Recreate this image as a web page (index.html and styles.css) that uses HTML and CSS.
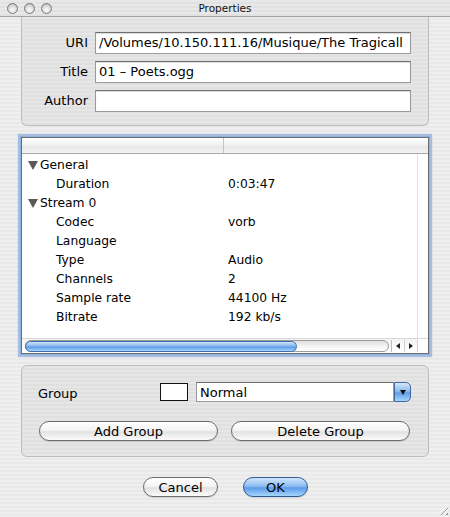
FILE: index.html
```html
<!DOCTYPE html>
<html>
<head>
<meta charset="utf-8">
<link rel="stylesheet" href="styles.css">
</head>
<body>
<div class="window">
  <div class="titlebar">
    <div class="lights"><span class="light"></span><span class="light"></span><span class="light"></span></div>
    <div class="title">Properties</div>
    <div></div>
  </div>

  <div class="box meta">
    <div class="lbl">URI</div><div class="field">/Volumes/10.150.111.16/Musique/The Tragicall</div>
    <div class="lbl">Title</div><div class="field">01 – Poets.ogg</div>
    <div class="lbl">Author</div><div class="field"></div>
  </div>

  <div class="tree">
    <div class="tree-head"><div class="hcol1"></div><div class="hcol2"></div></div>
    <div class="tree-main">
      <div class="rows">
        <div class="row"><div class="c1 parent"><span class="tri"></span>General</div><div class="c2"></div></div>
        <div class="row"><div class="c1 child">Duration</div><div class="c2">0:03:47</div></div>
        <div class="row"><div class="c1 parent"><span class="tri"></span>Stream 0</div><div class="c2"></div></div>
        <div class="row"><div class="c1 child">Codec</div><div class="c2">vorb</div></div>
        <div class="row"><div class="c1 child">Language</div><div class="c2"></div></div>
        <div class="row"><div class="c1 child">Type</div><div class="c2">Audio</div></div>
        <div class="row"><div class="c1 child">Channels</div><div class="c2">2</div></div>
        <div class="row"><div class="c1 child">Sample rate</div><div class="c2">44100 Hz</div></div>
        <div class="row"><div class="c1 child">Bitrate</div><div class="c2">192 kb/s</div></div>
      </div>
      <div class="vscroll"></div>
    </div>
    <div class="hscroll">
      <div class="track"><div class="thumb"></div></div>
      <div class="arrows"><span class="arr left"></span><span class="arr right"></span></div>
      <div class="corner"></div>
    </div>
  </div>

  <div class="box group">
    <div class="grow">
      <div class="glabel">Group</div>
      <div class="swatch"></div>
      <div class="combo"><div class="combo-text">Normal</div><div class="combo-btn"><span class="dtri"></span></div></div>
    </div>
    <div class="gbuttons">
      <div class="btn wide">Add Group</div>
      <div class="btn wide">Delete Group</div>
    </div>
  </div>

  <div class="actions">
    <div class="btn cancel">Cancel</div>
    <div class="btn ok">OK</div>
  </div>

  <div class="grip"></div>
</div>
</body>
</html>
```

FILE: styles.css
```css
* { box-sizing: border-box; }
html, body { margin: 0; padding: 0; }
body {
  width: 450px;
  height: 517px;
  overflow: hidden;
  font-family: "DejaVu Sans", "Liberation Sans", sans-serif;
  font-size: 12px;
  color: #000;
}
.window {
  position: relative;
  width: 450px;
  height: 517px;
  display: flex;
  flex-direction: column;
  background: repeating-linear-gradient(to bottom, #efefef 0, #efefef 2px, #e9e9e9 2px, #e9e9e9 4px);
}
.titlebar {
  height: 17px;
  flex: none;
  border-bottom: 1px solid #a3a3a3;
  background: repeating-linear-gradient(to bottom, #e8e8e8 0, #e8e8e8 2px, #e1e1e1 2px, #e1e1e1 4px);
  display: grid;
  grid-template-columns: 1fr auto 1fr;
  align-items: center;
}
.lights { display: flex; gap: 6px; padding-left: 7px; }
.light {
  width: 11px;
  height: 11px;
  border-radius: 50%;
  border: 1px solid #7a7a7a;
  background: radial-gradient(circle at 50% 65%, #fbfbfb 0, #e0e0e0 45%, #b0b0b0 100%);
}
.title { font-size: 10.5px; color: #111; line-height: 16px; }

.box {
  margin: 0 21px;
  border: 1px solid #bdbdbd;
  background: repeating-linear-gradient(to bottom, #e6e6e6 0, #e6e6e6 2px, #e0e0e0 2px, #e0e0e0 4px);
}
.meta {
  height: 109px;
  flex: none;
  border-top: none;
  border-radius: 0 0 6px 6px;
  padding: 15px 17px 0 0;
  display: grid;
  grid-template-columns: 66px 1fr;
  grid-auto-rows: 22px;
  column-gap: 7px;
  row-gap: 7px;
}
.lbl { text-align: right; line-height: 22px; font-size: 13px; }
.field {
  background: #fff;
  border: 1px solid #9a9a9a;
  border-top-color: #6f6f6f;
  box-shadow: inset 0 1px 1px rgba(0,0,0,0.15);
  padding: 0 3px;
  line-height: 20px;
  font-size: 13px;
  white-space: nowrap;
  overflow: hidden;
}

.tree {
  margin: 11px 21px 0;
  height: 217px;
  flex: none;
  border: 1px solid #6d6d6d;
  background: #fff;
  box-shadow: 0 0 0 1px #8fb1de, 0 0 1px 3px rgba(110,155,215,0.55);
  display: flex;
  flex-direction: column;
}
.tree-head {
  height: 16px;
  flex: none;
  display: flex;
  border-bottom: 1px solid #a9a9a9;
  background: linear-gradient(#ffffff, #f0f0f0 50%, #e6e6e6 50%, #f2f2f2);
}
.hcol1 { width: 202px; border-right: 1px solid #c4c4c4; }
.hcol2 { flex: 1; }
.tree-main { flex: 1; display: flex; min-height: 0; }
.rows { flex: 1; padding-top: 2px; }
.row { display: grid; grid-template-columns: 206px 1fr; height: 19px; line-height: 19px; font-size: 12.3px; }
.c1.parent { padding-left: 6px; display: flex; align-items: center; }
.c1.child { padding-left: 34px; }
.tri {
  width: 0;
  height: 0;
  border-left: 5px solid transparent;
  border-right: 5px solid transparent;
  border-top: 9px solid #5a5a5a;
  margin-right: 2px;
}
.vscroll { width: 11px; border-left: 1px solid #e2e2e2; background: #fff; }
.hscroll {
  height: 15px;
  flex: none;
  display: flex;
  align-items: center;
  padding-left: 3px;
  background: linear-gradient(#f4f4f4, #ffffff);
  border-top: 1px solid #d8d8d8;
}
.track {
  width: 364px;
  height: 12px;
  border: 1px solid #9c9c9c;
  border-radius: 6px;
  background: linear-gradient(#dedede, #f7f7f7 60%, #ffffff);
  display: flex;
  align-items: center;
}
.thumb {
  width: 272px;
  height: 11px;
  border-radius: 6px;
  border: 1px solid #3d6fb3;
  background: linear-gradient(#cfe3f9, #8ab8ee 45%, #5d9be6 55%, #a6d3fb);
  margin-left: -1px;
}
.arrows { display: flex; width: 27px; height: 12px; margin-left: 2px; border-left: 1px solid #bbb; }
.arr { flex: 1; display: flex; align-items: center; justify-content: center; border-right: 1px solid #cfcfcf; }
.arr.left::before {
  content: "";
  border-top: 3px solid transparent;
  border-bottom: 3px solid transparent;
  border-right: 4px solid #222;
}
.arr.right::before {
  content: "";
  border-top: 3px solid transparent;
  border-bottom: 3px solid transparent;
  border-left: 4px solid #222;
}
.corner { flex: 1; height: 100%; background: #fff; }

.group {
  margin-top: 11px;
  height: 92px;
  flex: none;
  border-radius: 6px;
  padding: 16px 17px 0 16px;
}
.grow { display: flex; align-items: center; height: 20px; }
.glabel { width: 122px; font-size: 13px; padding-top: 2px; }
.swatch { width: 28px; height: 18px; border: 1px solid #111; background: #fff; margin-right: 8px; }
.combo { width: 215px; height: 20px; display: flex; }
.combo-text {
  flex: 1;
  background: #fff;
  border: 1px solid #9a9a9a;
  border-top-color: #6f6f6f;
  padding: 1px 3px 0;
  line-height: 18px;
  font-size: 13px;
}
.combo-btn {
  width: 17px;
  border: 1px solid #44689a;
  border-radius: 0 5px 5px 0;
  background: linear-gradient(#d3e6fa, #8fbdf0 45%, #5e9de6 55%, #a7d4fb);
  display: flex;
  align-items: center;
  justify-content: center;
}
.dtri {
  border-left: 3.5px solid transparent;
  border-right: 3.5px solid transparent;
  border-top: 5px solid #111;
}
.gbuttons { display: flex; gap: 13px; margin-top: 19px; padding-left: 1px; }

.btn {
  height: 20px;
  border: 1px solid #6c6c6c;
  border-radius: 10px;
  background: linear-gradient(#ffffff, #f4f4f4 45%, #e2e2e2 55%, #fbfbfb);
  box-shadow: 0 1px 1px rgba(0,0,0,0.12);
  display: flex;
  align-items: center;
  justify-content: center;
  font-size: 13px;
}
.btn.wide { width: 179px; }
.actions { display: flex; justify-content: center; gap: 25px; margin-top: 20px; padding-left: 1px; }
.btn.cancel { width: 75px; }
.btn.ok {
  width: 65px;
  border-color: #2f5b94;
  background: linear-gradient(#d0e5fb, #8ebef2 45%, #5b9be8 55%, #a5d6fd);
}
.grip {
  position: absolute;
  right: 2px;
  bottom: 2px;
  width: 11px;
  height: 11px;
  background: repeating-linear-gradient(135deg, transparent 0, transparent 2px, #9a9a9a 2px, #9a9a9a 3px, #fff 3px, #fff 4px);
  clip-path: polygon(100% 0, 100% 100%, 0 100%);
}
```
